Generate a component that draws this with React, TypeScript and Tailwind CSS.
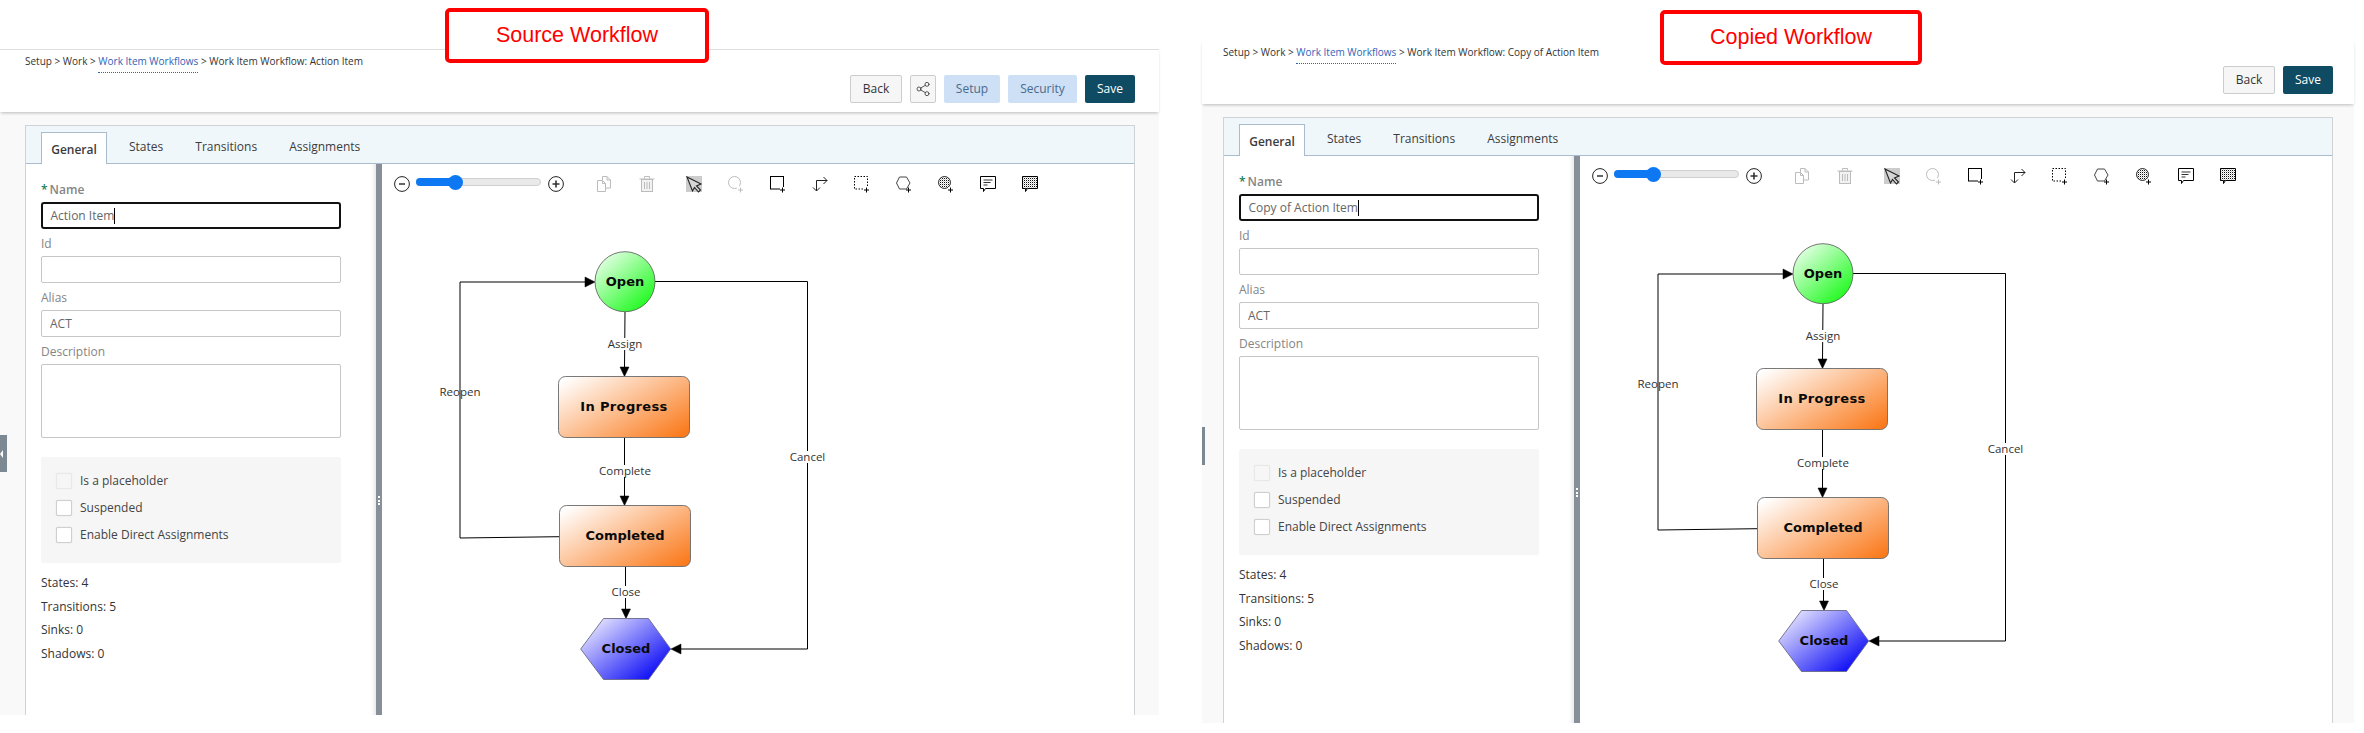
import React from "react";
import { Share2 } from "lucide-react";

const Plus = () => <path d="M12.5 11.5v5M10 14h5" stroke="#000" strokeWidth="1" fill="none" />;
const Patterns = () => (
  <svg width="0" height="0" className="absolute">
    <defs>
      <pattern id="dots" width="2" height="2" patternUnits="userSpaceOnUse">
        <rect width="2" height="2" fill="#fff" />
        <rect width="1" height="1" fill="#111" />
        <rect x="1" y="1" width="1" height="1" fill="#ccc" />
      </pattern>
    </defs>
  </svg>
);

const Ic = ({ children, className = "" }: { children: React.ReactNode; className?: string }) => (
  <svg width="16" height="16" viewBox="0 0 16 16" overflow="visible" className={`block shrink-0 ${className}`} fill="none">
    {children}
  </svg>
);

function Toolbar() {
  return (
    <div className="flex items-center h-[36px] pt-[4px] pl-[12px]">
      <svg width="16" height="16" viewBox="0 0 16 16" className="block shrink-0" fill="none">
        <circle cx="8" cy="8" r="7.4" stroke="#222" />
        <path d="M5 8h6" stroke="#666" strokeWidth="2" />
      </svg>
      <div className="relative ml-[5.5px] mb-[4px] w-[125px] h-[8px] rounded-full bg-[#e9e9e9] border border-[#cfcfcf]">
        <div className="absolute -left-px -top-px h-[8px] w-[39px] rounded-l-full bg-[#0d78f2]" />
        <div className="absolute left-[31px] top-[-4.5px] w-[15px] h-[15px] rounded-full bg-[#0d78f2]" />
      </div>
      <svg width="16" height="16" viewBox="0 0 16 16" className="block shrink-0 ml-[7.5px]" fill="none">
        <circle cx="8" cy="8" r="7.4" stroke="#222" />
        <path d="M4.5 8h7M8 4.5v7" stroke="#333" strokeWidth="1.6" />
      </svg>
      <Ic className="ml-[33px]">
        <path d="M5.5 4V.5h4.5l3.5 3.5v8H8.5" stroke="#bcbcbc" />
        <path d="M10 .5V4h3.5" stroke="#bcbcbc" />
        <path d="M.5 4.5h5l3 3v8h-8z" stroke="#bcbcbc" fill="#fff" />
        <path d="M5.5 4.5v3h3" stroke="#bcbcbc" />
      </Ic>
      <Ic className="ml-[26px]">
        <path d="M5.5 2.5v-2h5v2M.5 3h15" stroke="#bcbcbc" />
        <rect x="2.5" y="3.5" width="11" height="12" fill="#f2f2f2" stroke="#bcbcbc" />
        <path d="M5.5 6v7M8 6v7M10.5 6v7" stroke="#bcbcbc" />
      </Ic>
      <Ic className="ml-[31px] bg-[#cccccc]">
        <path d="M1 1l14 7-4.5 2 4 4-2 2-4-4.5L6.5 15z" stroke="#222" strokeWidth="1.1" fill="#d6d6d6" />
      </Ic>
      <Ic className="ml-[26px]">
        <circle cx="6.5" cy="6.5" r="6" stroke="#bcbcbc" />
        <rect x="9" y="10" width="7" height="6" fill="#fff" />
        <path d="M12.5 11.5v5M10 14h5" stroke="#bcbcbc" />
      </Ic>
      <Ic className="ml-[26px]">
        <rect x=".5" y=".5" width="13" height="12.5" stroke="#000" />
        <rect x="10" y="11" width="6" height="5" fill="#fff" />
        <Plus />
      </Ic>
      <Ic className="ml-[26px]">
        <path d="M4.5 15V4.5H15" stroke="#222" />
        <path d="M1 11.5l3.5 3.5L8 11.5M11.5 1L15 4.5 11.5 8" stroke="#222" />
      </Ic>
      <Ic className="ml-[26px]">
        <rect x=".5" y=".5" width="13" height="12.5" stroke="#000" strokeDasharray="1.5 1.5" />
        <rect x="10" y="11" width="6" height="5" fill="#fff" />
        <Plus />
      </Ic>
      <Ic className="ml-[26px]">
        <path d="M3.5 1h7L14 7l-3.5 6h-7L.5 7z" stroke="#444" />
        <Plus />
      </Ic>
      <Ic className="ml-[26px]">
        <circle cx="6.5" cy="6.5" r="6" stroke="#333" fill="url(#dots)" />
        <rect x="10" y="11" width="6" height="5" fill="#fff" />
        <Plus />
      </Ic>
      <Ic className="ml-[26px]">
        <path d="M.5.5h15v12H5.5l-2 3v-3h-3z" stroke="#000" />
        <path d="M3.5 4h9M3.5 6.500h7M3.5 9h4" stroke="#333" />
      </Ic>
      <Ic className="ml-[26px]">
        <path d="M.5.5h15v12H5.5l-2 3v-3h-3z" stroke="#000" fill="url(#dots)" />
      </Ic>
    </div>
  );
}

const stateText = "text-[13px] font-bold fill-[#0a0a0a] font-['DejaVu_Sans',sans-serif]";
const labelText = "text-[11.5px] fill-[#333] font-['Open_Sans',sans-serif]";

function Diagram({ uid }: { uid: string }) {
  const arrow = (d: string) => <path d={d} fill="#000" stroke="#000" strokeWidth="0.5" />;
  return (
    <svg width="752" height="520" viewBox="382 200 752 520" className="block" fill="none">
      <defs>
        <linearGradient id={`g${uid}`} x1="0.1" y1="0.05" x2="0.9" y2="0.95">
          <stop offset="0" stopColor="#ecffec" />
          <stop offset="1" stopColor="#14fa14" />
        </linearGradient>
        <linearGradient id={`o${uid}`} x1="0" y1="0.1" x2="1" y2="0.9">
          <stop offset="0" stopColor="#ffffff" />
          <stop offset="1" stopColor="#fa7a1c" />
        </linearGradient>
        <linearGradient id={`b${uid}`} x1="0.05" y1="0.1" x2="0.95" y2="0.9">
          <stop offset="0" stopColor="#ecebff" />
          <stop offset="1" stopColor="#0000f5" />
        </linearGradient>
      </defs>
      <path d="M559.5 536.7L460 538V282H586" stroke="#000" />
      <path d="M655 281.5H807.5V649H680" stroke="#000" />
      <path d="M625 312L624.5 368" stroke="#000" />
      <path d="M624.5 437.5V497" stroke="#000" />
      <path d="M625.5 566.5V610" stroke="#000" />
      {arrow("M585 277L595 282L585 287z")}
      {arrow("M620 367L629 367L624.5 376.5z")}
      {arrow("M620 496L629 496L624.5 505.5z")}
      {arrow("M621.5 609L630.5 609L626 618.5z")}
      {arrow("M681 644V654L671 649z")}

      <circle cx="625" cy="281.7" r="30" fill={`url(#g${uid})`} stroke="#555" strokeWidth="0.8" />
      <rect x="558.5" y="376.5" width="131" height="61" rx="7" fill={`url(#o${uid})`} stroke="#6a6a6a" strokeWidth="0.9" />
      <rect x="559.5" y="505.5" width="131" height="61" rx="7" fill={`url(#o${uid})`} stroke="#6a6a6a" strokeWidth="0.9" />
      <path d="M603.5 618.5H648.5L670.7 649L648.5 679.5H603.5L580.7 649z" fill={`url(#b${uid})`} stroke="#6a6a88" strokeWidth="0.9" />

      <text x="625" y="286" textAnchor="middle" className={stateText}>Open</text>
      <text x="624" y="411" textAnchor="middle" letterSpacing="0.35" className={stateText}>In Progress</text>
      <text x="625" y="540" textAnchor="middle" className={stateText}>Completed</text>
      <text x="626" y="653" textAnchor="middle" className={stateText}>Closed</text>

      <rect x="607" y="338" width="36" height="12" fill="#fff" />
      <text x="625" y="348" textAnchor="middle" className={labelText}>Assign</text>
      <rect x="599" y="465" width="52" height="12" fill="#fff" />
      <text x="625" y="475" textAnchor="middle" className={labelText}>Complete</text>
      <rect x="611" y="586" width="30" height="12" fill="#fff" />
      <text x="626" y="596" textAnchor="middle" className={labelText}>Close</text>
      <rect x="790" y="451" width="36" height="12" fill="#fff" />
      <text x="807.5" y="461" textAnchor="middle" className={labelText}>Cancel</text>
      <text x="460" y="396" textAnchor="middle" className={labelText}>Reopen</text>
    </svg>
  );
}

const fieldLabel = "block h-[16px] leading-[16px] text-[12px] text-[#858585]";
const fieldInput =
  "block w-full h-[27px] px-[8px] text-[12px] text-[#666] bg-white border border-[#c6c6c6] rounded-[2px] outline-none";

function Check({ label, disabled }: { label: string; disabled?: boolean }) {
  return (
    <div className="flex items-center h-[16px] gap-[8px]">
      <span
        className={
          disabled
            ? "w-[16px] h-[16px] rounded-[2px] border border-[#e8e8e8] bg-[#f6f6f6] shadow-[0_0_1px_rgba(0,0,0,0.1)]"
            : "w-[16px] h-[16px] rounded-[2px] border border-[#cfcfcf] bg-white shadow-[0_0_1px_rgba(0,0,0,0.2)]"
        }
      />
      <span className="text-[12px] text-[#444]">{label}</span>
    </div>
  );
}

function Screen({
  name,
  uid,
  full,
  shell,
  header,
  body,
  handle,
}: {
  name: string;
  uid: string;
  full: boolean;
  shell: string;
  header: string;
  body: string;
  handle: React.ReactNode;
}) {
  return (
    <section className={`relative flex flex-col shrink-0 ${shell}`}>
      <header className={`relative z-10 h-[63px] bg-white shadow-[0_2px_3px_-1px_rgba(0,0,0,0.25)] ${header}`}>
        <nav className="h-[24px] pt-[2px] text-[10px] leading-[16px] text-[#333] whitespace-nowrap">
          Setup &gt; Work &gt;{" "}
          <a className="inline-block h-[20px] text-[#2f62b8] border-b border-dotted border-[#1f66c4]">Work Item Workflows</a>{" "}
          &gt; Work Item Workflow: {name}
        </nav>
        <div className="flex justify-end gap-[8px] text-[12px]">
          <button className="w-[52px] h-[28px] rounded-[2px] border border-[#cccccc] bg-[#f6f6f6] text-[#333]">Back</button>
          {full && (
            <>
              <button className="flex items-center justify-center w-[26px] h-[28px] rounded-[2px] border border-[#cccccc] bg-[#f6f6f6] text-[#333]">
                <Share2 size={16} strokeWidth={1.2} />
              </button>
              <button className="w-[56px] h-[28px] rounded-[2px] bg-[#cde0f6] text-[#4a6a8c]">Setup</button>
              <button className="w-[69px] h-[28px] rounded-[2px] bg-[#cde0f6] text-[#4a6a8c]">Security</button>
            </>
          )}
          <button className="w-[50px] h-[28px] rounded-[2px] bg-[#0f4c64] text-white">Save</button>
        </div>
      </header>
      <div className={`flex-1 min-h-0 bg-[#f9f9f9] pt-[13px] ${body}`}>
        <div className="flex flex-col w-[1110px] h-full bg-white border-x border-t border-[#cfd3d6]">
          <div className="flex items-end h-[38px] pl-[15px] gap-[32px] bg-[#f0f7fb] border-b border-[#a9bccd] text-[12px] text-[#3c3c3c]">
            <div className="relative -mb-px mr-[-10px] w-[66px] h-[32px] text-center leading-[33px] bg-white border-x border-t border-[#a9bccd] font-semibold">General</div>
            <div className="h-[32px] leading-[32px]">States</div>
            <div className="h-[32px] leading-[32px]">Transitions</div>
            <div className="h-[32px] leading-[32px]">Assignments</div>
          </div>
          <div className="flex flex-1 min-h-0">
            <div className="w-[350px] shrink-0 pl-[15px] pr-[35px] pt-[18px] shadow-[inset_-6px_0_6px_-6px_rgba(0,0,0,0.18)]">
              <label className={`${fieldLabel} font-semibold`}>
                <span className="text-[#1c7c54] mr-[2px]">*</span>Name
              </label>
              <div className="flex items-center mt-[4px] h-[27px] px-[7.5px] text-[12px] text-[#666] bg-white border-2 border-[#111] rounded-[3px]">
                {uid === "a" ? "Action Item" : "Copy of Action Item"}
                <span className="inline-block w-px h-[16px] bg-black" />
              </div>
              <label className={`${fieldLabel} mt-[7px]`}>Id</label>
              <input readOnly value="" className={`${fieldInput} mt-[4px]`} />
              <label className={`${fieldLabel} mt-[7px]`}>Alias</label>
              <input readOnly value="ACT" className={`${fieldInput} mt-[4px]`} />
              <label className={`${fieldLabel} mt-[7px]`}>Description</label>
              <textarea readOnly value="" className="block w-full h-[74px] mt-[4px] bg-white border border-[#c6c6c6] rounded-[2px] resize-none outline-none" />
              <div className="flex flex-col gap-[11px] h-[106px] mt-[19px] pt-[16px] px-[15px] bg-[#f6f6f6] rounded-[2px]">
                <Check label="Is a placeholder" disabled />
                <Check label="Suspended" />
                <Check label="Enable Direct Assignments" />
              </div>
              <div className="mt-[8px] text-[12px] leading-[23.6px] text-[#333]">
                <div>States: 4</div>
                <div>Transitions: 5</div>
                <div>Sinks: 0</div>
                <div>Shadows: 0</div>
              </div>
            </div>
            <div className="relative w-[6px] shrink-0 bg-[#87909a]">
              <div className="absolute left-[2px] top-[332px] flex flex-col gap-[1.5px]">
                <span className="block w-[2px] h-[2px] bg-white" />
                <span className="block w-[2px] h-[2px] bg-white" />
                <span className="block w-[2px] h-[2px] bg-white" />
              </div>
            </div>
            <div className="flex-1 min-w-0 overflow-hidden">
              <Toolbar />
              <Diagram uid={uid} />
            </div>
          </div>
        </div>
      </div>
      {handle}
    </section>
  );
}

export default function App() {
  return (
    <div className="relative flex w-[2364px] h-[733px] overflow-hidden bg-white font-['Open_Sans',sans-serif]">
      <Patterns />
      <Screen
        name="Action Item"
        uid="a"
        full
        shell="w-[1159px] h-[715px] pt-[49px]"
        header="border-t border-[#dedede] pl-[25px] pr-[24px] pt-[1px]"
        body="pl-[25px]"
        handle={
          <div className="absolute left-0 top-[435px] flex items-center w-[7px] h-[37px] bg-[#7c8892]">
            <span className="block w-0 h-0 border-y-[4px] border-y-transparent border-r-[3px] border-r-white" />
          </div>
        }
      />
      <Screen
        name="Copy of Action Item"
        uid="b"
        full={false}
        shell="ml-[43px] w-[1152px] h-[723px] pt-[41px]"
        header="pl-[21px] pr-[21px] pt-[1px]"
        body="pl-[21px]"
        handle={<div className="absolute left-0 top-[427px] w-[3px] h-[38px] bg-[#7c8892]" />}
      />
      <div className="absolute z-20 left-[445px] top-[8px] flex items-center justify-center w-[264px] h-[55px] rounded-[5px] border-4 border-[#ff0000] bg-white font-['Liberation_Sans',sans-serif] text-[21.5px] text-[#ff0000]">
        Source Workflow
      </div>
      <div className="absolute z-20 left-[1660px] top-[10px] flex items-center justify-center w-[262px] h-[55px] rounded-[5px] border-4 border-[#ff0000] bg-white font-['Liberation_Sans',sans-serif] text-[21.5px] text-[#ff0000]">
        Copied Workflow
      </div>
    </div>
  );
}
